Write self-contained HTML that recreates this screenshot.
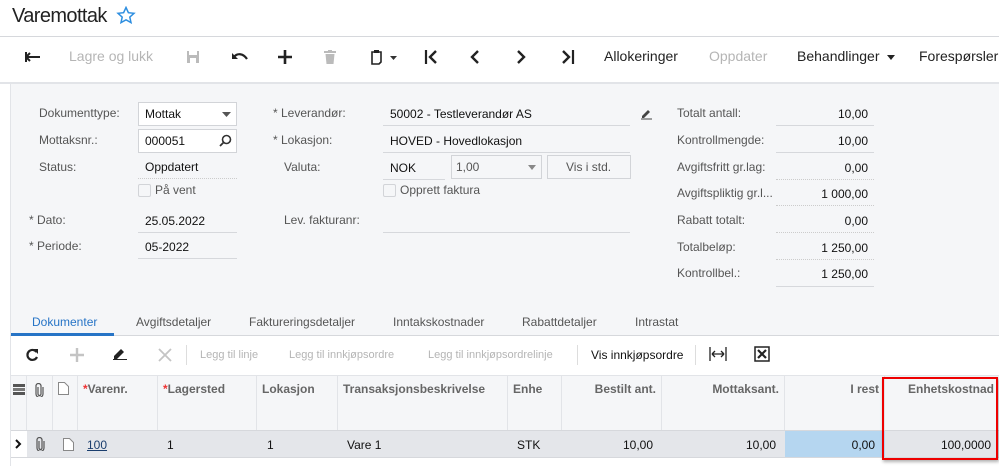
<!DOCTYPE html>
<html><head><meta charset="utf-8"><style>
*{box-sizing:border-box;margin:0;padding:0}
body{width:999px;height:466px;overflow:hidden;background:#fff;font-family:"Liberation Sans",Arial,sans-serif;font-size:12px;color:#222;position:relative}
.a{position:absolute;white-space:nowrap}
.lbl{color:#555;font-size:12px}
.val{color:#111;font-size:12px}
.ul{position:absolute;height:1px;background:#d6d8dc}
.dot{position:absolute;height:1px;border-top:1px dotted #ccc}
.box{position:absolute;border:1px solid #d2d4d8;background:#fff}
.tb{position:absolute;top:48px;font-size:14px;color:#222}
.dis{color:#b5b5b5}
.star{color:#555}
.th{position:absolute;top:376px;height:54px;border-right:1px solid #e2e4e8;font-weight:bold;color:#666;font-size:12px;padding:6px 5px}
.td{position:absolute;top:431px;height:26px;font-size:12px;color:#111;padding:7px 5px}
</style></head><body>
<div class="a" style="left:12px;top:5px;font-size:20px;letter-spacing:-0.6px;color:#222">Varemottak</div>
<svg class="a" style="left:116px;top:6px" width="20" height="18" viewBox="0 0 20 18"><path d="M10 1.5l2.4 5.2 5.6.6-4.2 3.8 1.2 5.5L10 13.8 5 16.6l1.2-5.5L2 7.3l5.6-.6z" fill="none" stroke="#2d8ee0" stroke-width="1.5"/></svg>
<div class="a" style="left:0;top:36px;width:999px;height:1px;background:#d6d8dc"></div>
<!-- toolbar -->
<svg class="a" style="left:25px;top:51px" width="16" height="12"><path d="M1 6h14M1 6l4-4M1 6l4 4M1 1v10" stroke="#222" stroke-width="2" fill="none"/></svg>
<div class="tb dis" style="left:69px">Lagre og lukk</div>
<svg class="a" style="left:186px;top:50px" width="14" height="14"><rect x="1" y="1" width="12" height="12" fill="#bbb"/><rect x="3" y="1" width="8" height="4" fill="#fff"/><rect x="4" y="8" width="6" height="5" fill="#fff"/></svg>
<svg class="a" style="left:231px;top:51px" width="18" height="12"><path d="M3 6c3-4 9-4 13 2" stroke="#222" stroke-width="2.2" fill="none"/><path d="M1 2v6h6z" fill="#222"/></svg>
<svg class="a" style="left:278px;top:50px" width="14" height="14"><path d="M7 0v14M0 7h14" stroke="#222" stroke-width="2.6"/></svg>
<svg class="a" style="left:324px;top:50px" width="12" height="14"><rect x="0" y="1" width="12" height="2" fill="#bbb"/><rect x="4" y="0" width="4" height="2" fill="#bbb"/><path d="M1.5 4h9l-1 10h-7z" fill="#bbb"/></svg>
<svg class="a" style="left:370px;top:49px" width="30" height="16"><path d="M2 3h9v10l-2 2H2z" fill="none" stroke="#222" stroke-width="1.6"/><rect x="4" y="1" width="5" height="3" fill="#222"/><path d="M20 7h7l-3.5 4z" fill="#333"/></svg>
<svg class="a" style="left:424px;top:50px" width="14" height="14"><path d="M2 0v14" stroke="#222" stroke-width="2.2"/><path d="M12 1L6 7l6 6" stroke="#222" stroke-width="2.4" fill="none"/></svg>
<svg class="a" style="left:470px;top:50px" width="10" height="14"><path d="M8 1L2 7l6 6" stroke="#222" stroke-width="2.4" fill="none"/></svg>
<svg class="a" style="left:516px;top:50px" width="10" height="14"><path d="M2 1l6 6-6 6" stroke="#222" stroke-width="2.4" fill="none"/></svg>
<svg class="a" style="left:561px;top:50px" width="14" height="14"><path d="M2 1l6 6-6 6" stroke="#222" stroke-width="2.4" fill="none"/><path d="M12 0v14" stroke="#222" stroke-width="2.2"/></svg>
<div class="tb" style="left:604px">Allokeringer</div>
<div class="tb dis" style="left:709px">Oppdater</div>
<div class="tb" style="left:797px">Behandlinger</div>
<svg class="a" style="left:887px;top:55px" width="8" height="5"><path d="M0 0h8L4 5z" fill="#222"/></svg>
<div class="tb" style="left:919px">Forespørsler</div>
<div class="a" style="left:0;top:82px;width:999px;height:2px;background:#e2e4e8"></div>
<!-- form panel -->
<div class="a" style="left:10px;top:84px;width:989px;height:252px;background:#f5f6f8;border-left:1px solid #e2e4e8"></div>
<div class="a lbl" style="left:39px;top:106px">Dokumenttype:</div>
<div class="box" style="left:138px;top:102px;width:99px;height:24px"></div>
<div class="a val" style="left:145px;top:107px">Mottak</div>
<svg class="a" style="left:222px;top:112px" width="9" height="5"><path d="M0 0h9L4.5 5z" fill="#555"/></svg>
<div class="a lbl" style="left:39px;top:133px">Mottaksnr.:</div>
<div class="box" style="left:138px;top:129px;width:99px;height:24px"></div>
<div class="a val" style="left:145px;top:134px">000051</div>
<svg class="a" style="left:219px;top:134px" width="13" height="13"><circle cx="7.5" cy="5.5" r="4" fill="none" stroke="#333" stroke-width="1.6"/><path d="M4.5 8.5L1 12" stroke="#333" stroke-width="1.8"/></svg>
<div class="a lbl" style="left:39px;top:160px">Status:</div>
<div class="a val" style="left:145px;top:160px">Oppdatert</div>
<div class="dot" style="left:138px;top:178px;width:99px"></div>
<div class="box" style="left:138px;top:184px;width:13px;height:13px;border-radius:2px;background:#f5f6f8"></div>
<div class="a lbl" style="left:155px;top:183px">På vent</div>
<div class="a lbl" style="left:29px;top:213px"><span class="star">*</span> Dato:</div>
<div class="a val" style="left:145px;top:214px">25.05.2022</div>
<div class="ul" style="left:138px;top:232px;width:99px"></div>
<div class="a lbl" style="left:29px;top:239px"><span class="star">*</span> Periode:</div>
<div class="a val" style="left:145px;top:240px">05-2022</div>
<div class="ul" style="left:138px;top:258px;width:99px"></div>

<div class="a lbl" style="left:273px;top:106px"><span class="star">*</span> Leverandør:</div>
<div class="a val" style="left:390px;top:107px">50002 - Testleverandør AS</div>
<div class="ul" style="left:383px;top:125px;width:247px"></div>
<svg class="a" style="left:640px;top:107px" width="13" height="13"><path d="M2 9l6-6 2 2-6 6H2z" fill="#444"/><path d="M1 12h11" stroke="#444"/></svg>
<div class="a lbl" style="left:273px;top:133px"><span class="star">*</span> Lokasjon:</div>
<div class="a val" style="left:390px;top:134px">HOVED - Hovedlokasjon</div>
<div class="ul" style="left:383px;top:152px;width:247px"></div>
<div class="a lbl" style="left:284px;top:160px">Valuta:</div>
<div class="a val" style="left:390px;top:161px">NOK</div>
<div class="ul" style="left:383px;top:179px;width:62px"></div>
<div class="box" style="left:451px;top:155px;width:91px;height:24px;background:#f5f6f8"></div>
<div class="a lbl" style="left:456px;top:160px">1,00</div>
<svg class="a" style="left:528px;top:165px" width="8" height="5"><path d="M0 0h8L4 5z" fill="#888"/></svg>
<div class="box" style="left:547px;top:155px;width:84px;height:24px;background:#f5f6f8"></div>
<div class="a lbl" style="left:566px;top:160px">Vis i std.</div>
<div class="box" style="left:383px;top:184px;width:13px;height:13px;border-radius:2px;background:#f5f6f8"></div>
<div class="a lbl" style="left:400px;top:183px">Opprett faktura</div>
<div class="a lbl" style="left:284px;top:213px">Lev. fakturanr:</div>
<div class="ul" style="left:383px;top:232px;width:247px"></div>

<div class="a lbl" style="left:677px;top:106px">Totalt antall:</div>
<div class="a lbl" style="left:677px;top:133px">Kontrollmengde:</div>
<div class="a lbl" style="left:677px;top:160px">Avgiftsfritt gr.lag:</div>
<div class="a lbl" style="left:677px;top:186px">Avgiftspliktig gr.l...</div>
<div class="a lbl" style="left:677px;top:213px">Rabatt totalt:</div>
<div class="a lbl" style="left:677px;top:240px">Totalbeløp:</div>
<div class="a lbl" style="left:677px;top:266px">Kontrollbel.:</div>
<div class="a val" style="left:776px;top:107px;width:92px;text-align:right">10,00</div>
<div class="ul" style="left:776px;top:125px;width:98px"></div>
<div class="a val" style="left:776px;top:134px;width:92px;text-align:right">10,00</div>
<div class="ul" style="left:776px;top:152px;width:98px"></div>
<div class="a val" style="left:776px;top:161px;width:92px;text-align:right">0,00</div>
<div class="dot" style="left:776px;top:179px;width:98px"></div>
<div class="a val" style="left:776px;top:187px;width:92px;text-align:right">1 000,00</div>
<div class="dot" style="left:776px;top:205px;width:98px"></div>
<div class="a val" style="left:776px;top:214px;width:92px;text-align:right">0,00</div>
<div class="dot" style="left:776px;top:232px;width:98px"></div>
<div class="a val" style="left:776px;top:241px;width:92px;text-align:right">1 250,00</div>
<div class="dot" style="left:776px;top:259px;width:98px"></div>
<div class="a val" style="left:776px;top:267px;width:92px;text-align:right">1 250,00</div>
<div class="ul" style="left:776px;top:286px;width:98px"></div>

<!-- tabs -->
<div class="a" style="left:32px;top:315px;color:#2774c6">Dokumenter</div>
<div class="a lbl" style="left:136px;top:315px">Avgiftsdetaljer</div>
<div class="a lbl" style="left:249px;top:315px">Faktureringsdetaljer</div>
<div class="a lbl" style="left:393px;top:315px">Inntakskostnader</div>
<div class="a lbl" style="left:522px;top:315px">Rabattdetaljer</div>
<div class="a lbl" style="left:635px;top:315px">Intrastat</div>
<div class="a" style="left:10px;top:335px;width:989px;height:1px;background:#d6d8dc"></div>
<div class="a" style="left:11px;top:333px;width:103px;height:3px;background:#2774c6"></div>
<div class="a" style="left:10px;top:336px;width:1px;height:130px;background:#e2e4e8"></div>
<!-- grid toolbar -->
<svg class="a" style="left:25px;top:348px" width="14" height="14"><path d="M11.5 4A5 5 0 1 0 12 9" stroke="#222" stroke-width="2.2" fill="none"/><path d="M8 1h5v5z" fill="#222"/></svg>
<svg class="a" style="left:70px;top:348px" width="14" height="14"><path d="M7 0v14M0 7h14" stroke="#c4c4c4" stroke-width="2.4"/></svg>
<svg class="a" style="left:112px;top:346px" width="16" height="14"><path d="M2 10l7-7 3 3-7 7H2z" fill="#222"/><path d="M1 13.5h14" stroke="#222"/></svg>
<svg class="a" style="left:158px;top:348px" width="14" height="14"><path d="M1 1l12 12M13 1L1 13" stroke="#c4c4c4" stroke-width="1.8"/></svg>
<div class="a" style="left:186px;top:345px;width:1px;height:20px;background:#ddd"></div>
<div class="a dis" style="left:200px;top:349px;font-size:11px">Legg til linje</div>
<div class="a dis" style="left:289px;top:349px;font-size:11px">Legg til innkjøpsordre</div>
<div class="a dis" style="left:428px;top:349px;font-size:11px">Legg til innkjøpsordrelinje</div>
<div class="a" style="left:577px;top:345px;width:1px;height:20px;background:#ddd"></div>
<div class="a" style="left:591px;top:348px;font-size:12px;color:#111">Vis innkjøpsordre</div>
<div class="a" style="left:695px;top:345px;width:1px;height:20px;background:#ddd"></div>
<svg class="a" style="left:709px;top:347px" width="18" height="14"><path d="M1 0v14M17 0v14M3 7h12M3 7l3-3M3 7l3 3M15 7l-3-3M15 7l-3 3" stroke="#222" stroke-width="1.3" fill="none"/></svg>
<svg class="a" style="left:754px;top:346px" width="16" height="16"><rect x="1" y="1" width="14" height="14" fill="#fff" stroke="#222" stroke-width="1.5"/><path d="M4 4l8 8M12 4l-8 8" stroke="#222" stroke-width="2.2"/></svg>
<!-- grid header -->
<div class="a" style="left:11px;top:375px;width:988px;height:56px;background:#f5f6f8;border-top:1px solid #e2e4e8"></div>
<div class="th" style="left:11px;width:16px;padding:7px 2px"><svg width="12" height="14"><rect x="0" y="1" width="12" height="3" fill="#555"/><rect x="0" y="5" width="12" height="3" fill="#777"/><rect x="0" y="9" width="12" height="3" fill="#555"/></svg></div>
<div class="th" style="left:27px;width:26px;padding:7px 8px"><svg width="9" height="14"><path d="M3 4v7a1.5 1.5 0 0 0 3 0V3a2.5 2.5 0 0 0-5 0v8a3.5 3.5 0 0 0 7 0V4" stroke="#555" stroke-width="1.2" fill="none"/></svg></div>
<div class="th" style="left:53px;width:25px"><svg width="11" height="13"><path d="M.5.5h6l4 4v8H.5z" fill="#fff" stroke="#888"/></svg></div>
<div class="th" style="left:78px;width:80px"><span style="color:#e33">*</span>Varenr.</div>
<div class="th" style="left:158px;width:99px"><span style="color:#e33">*</span>Lagersted</div>
<div class="th" style="left:257px;width:81px">Lokasjon</div>
<div class="th" style="left:338px;width:170px">Transaksjonsbeskrivelse</div>
<div class="th" style="left:508px;width:54px">Enhe</div>
<div class="th" style="left:562px;width:100px;text-align:right">Bestilt ant.</div>
<div class="th" style="left:662px;width:123px;text-align:right">Mottaksant.</div>
<div class="th" style="left:785px;width:100px;text-align:right">I rest</div>
<div class="th" style="left:885px;width:114px;text-align:right;border:0">Enhetskostnad</div>
<!-- row -->
<div class="a" style="left:11px;top:430px;width:988px;height:28px;background:#e4e6ea;border-top:1px solid #d6d8dc;border-bottom:1px solid #d6d8dc"></div>
<div class="a" style="left:11px;top:431px;width:16px;height:26px;background:#fff"></div>
<svg class="a" style="left:15px;top:439px" width="7" height="10"><path d="M1 1l4 4-4 4" stroke="#111" stroke-width="2" fill="none"/></svg>
<svg class="a" style="left:36px;top:437px" width="9" height="14"><path d="M3 4v7a1.5 1.5 0 0 0 3 0V3a2.5 2.5 0 0 0-5 0v8a3.5 3.5 0 0 0 7 0V4" stroke="#555" stroke-width="1.2" fill="none"/></svg>
<div class="td" style="left:58px"><svg width="11" height="13"><path d="M.5.5h6l4 4v8H.5z" fill="#fff" stroke="#888"/></svg></div>
<div class="td" style="left:82px;text-decoration:underline;color:#1a3e6e">100</div>
<div class="td" style="left:162px">1</div>
<div class="td" style="left:262px">1</div>
<div class="td" style="left:342px">Vare 1</div>
<div class="td" style="left:512px">STK</div>
<div class="td" style="left:562px;width:96px;text-align:right">10,00</div>
<div class="td" style="left:662px;width:119px;text-align:right">10,00</div>
<div class="td" style="left:785px;width:100px;text-align:right;background:#b5d6f0;padding-right:10px">0,00</div>
<div class="td" style="left:885px;width:111px;text-align:right">100,0000</div>
<div class="a" style="left:882px;top:377px;width:116px;height:83px;border:2px solid #e00;box-shadow:1px 2px 3px rgba(0,0,0,.3)"></div>
</body></html>
